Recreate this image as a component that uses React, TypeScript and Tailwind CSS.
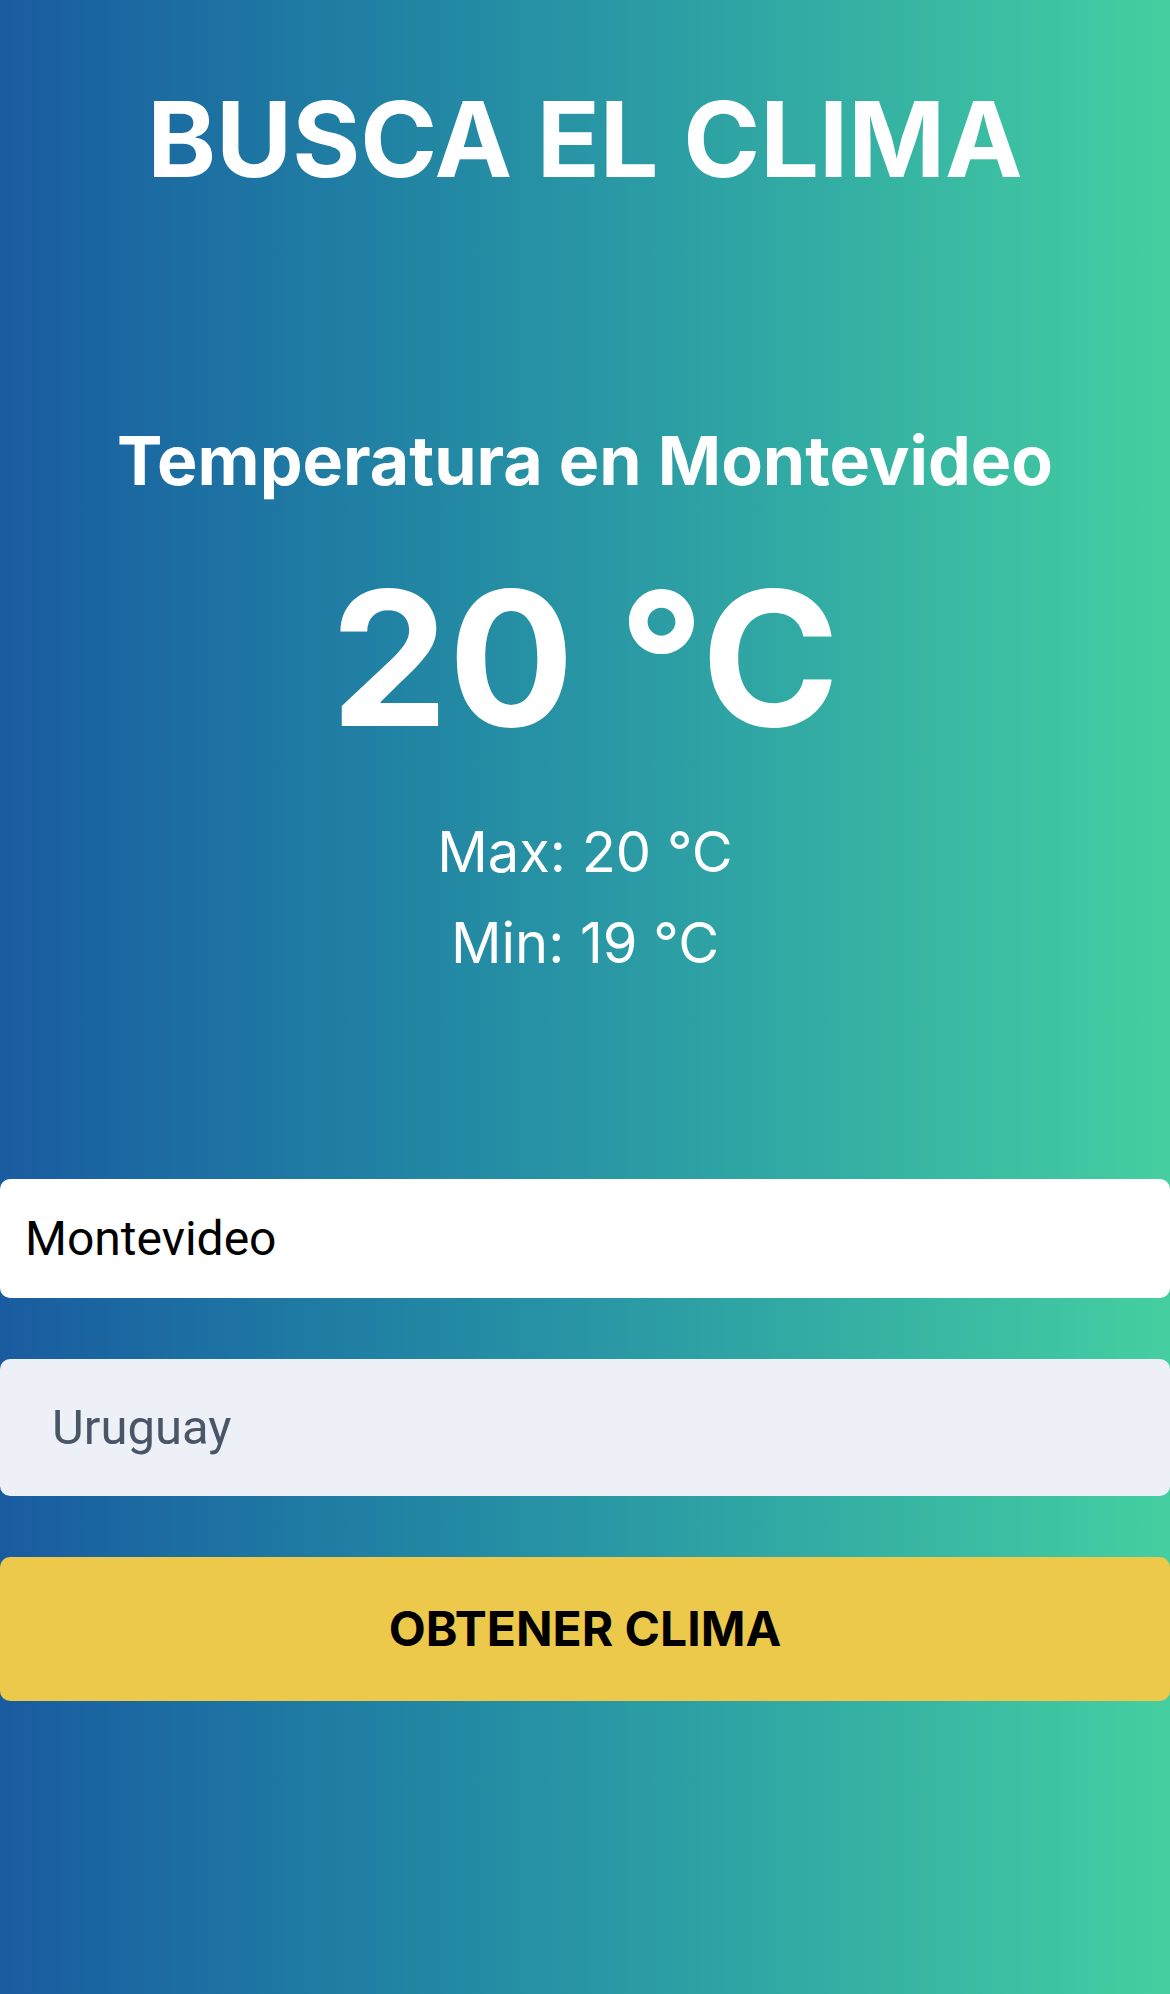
export default function App() {
  return (
    <main className="min-h-[1994px] w-full bg-gradient-to-r from-[#1a5ba0] to-[#45cfa0] text-white font-['Inter','Liberation_Sans',sans-serif]">
      <h1 className="pt-[87px] text-center text-[104px] font-bold leading-none">BUSCA EL CLIMA</h1>

      <section className="mt-[235px] flex flex-col items-center">
        <h2 className="text-[68px] font-bold leading-none">Temperatura en Montevideo</h2>
        <p className="mt-[71px] text-[187px] font-bold leading-none">20 °C</p>
        <div className="mt-[55px] text-center text-[56px] leading-[91px]">
          <p>Max: 20 °C</p>
          <p>Min: 19 °C</p>
        </div>
      </section>

      <form className="mt-[190px] flex flex-col">
        <input
          type="text"
          readOnly
          value="Montevideo"
          className="h-[119px] w-full rounded-[10px] bg-white pl-[25px] text-[48px] text-black font-['Roboto',sans-serif] focus:outline-none"
        />
        <input
          type="text"
          placeholder="Uruguay"
          className="mt-[61px] h-[137px] w-full rounded-[10px] bg-[#edf0f7] pl-[52px] text-[49px] text-[#4a5568] placeholder:text-[#4a5568] font-['Roboto',sans-serif] focus:outline-none"
        />
        <button
          type="button"
          className="mt-[61px] h-[144px] w-full rounded-[10px] bg-[#ecc94b] text-[48px] font-bold text-black"
        >
          OBTENER CLIMA
        </button>
      </form>
    </main>
  );
}
